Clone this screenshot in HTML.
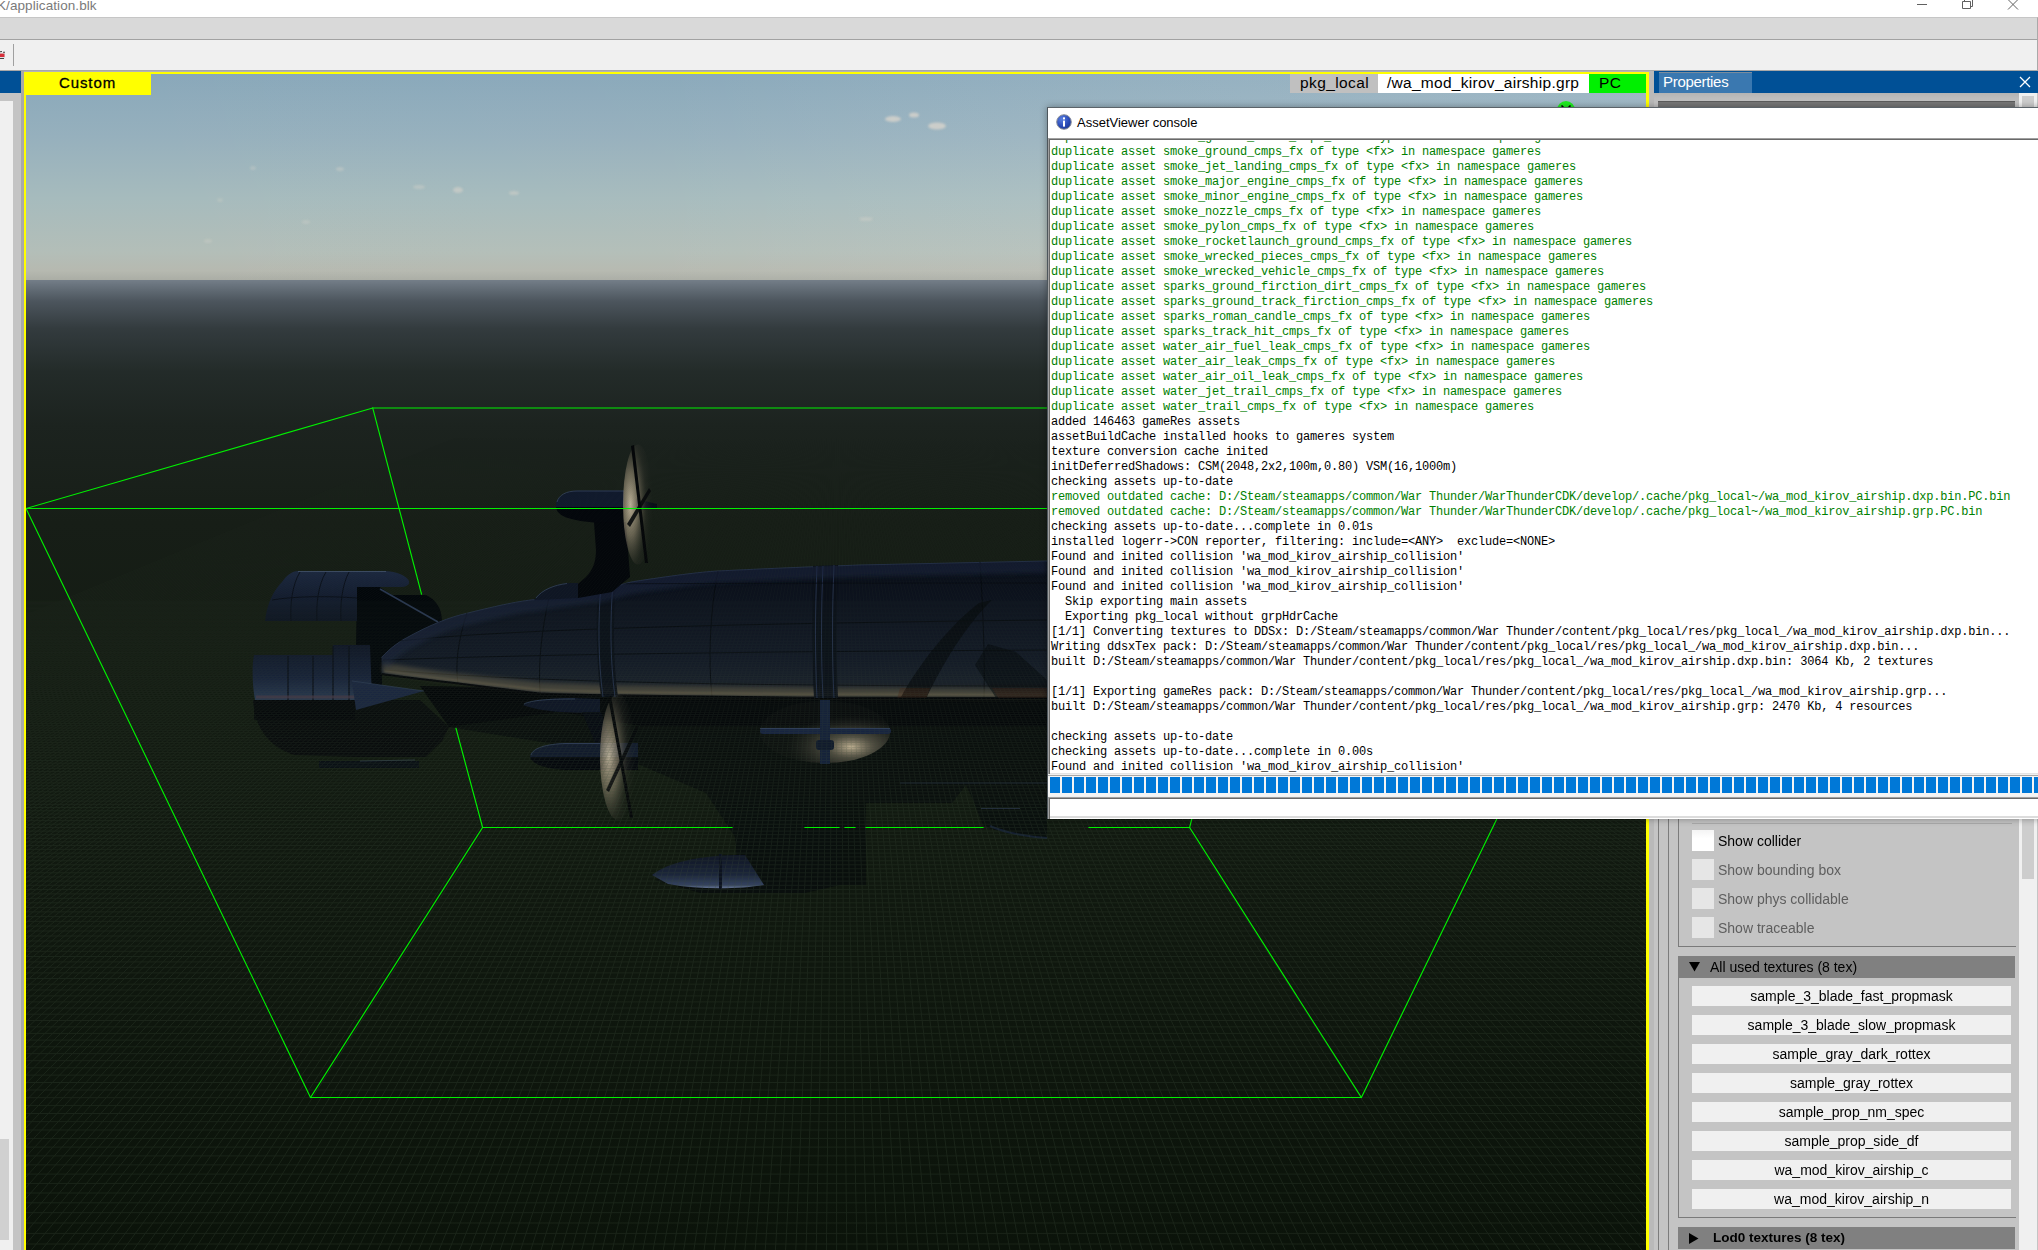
<!DOCTYPE html>
<html><head><meta charset="utf-8">
<style>
*{margin:0;padding:0;box-sizing:border-box}
html,body{width:2038px;height:1250px;overflow:hidden;background:#f0f0f0;font-family:"Liberation Sans",sans-serif;position:relative}
.a{position:absolute}
#title{left:0;top:0;width:2038px;height:17px;background:#fff}
#titletxt{left:-3px;top:-2px;font-size:13.5px;color:#7a7a7a;white-space:pre;line-height:16px;letter-spacing:0.08px}
#menubar{left:0;top:17px;width:2038px;height:23px;background:#d9d9d9;border-top:1px solid #c6c6c6;border-bottom:1px solid #a2a2a2;border-right:1px solid #a9a9a9}
#toolbar{left:0;top:40px;width:2038px;height:31px;background:#f0f0f0;border-bottom:1px solid #a8a8a8;border-right:1px solid #a9a9a9}
#leftpanel{left:0;top:71px;width:21px;height:1179px;background:#c4c4c4}
#splitL{left:21px;top:71px;width:3px;height:1179px;background:#a9a9a9}
#vp{left:24px;top:72px;width:1625px;height:1178px;background:#ff0;box-shadow:0 -1px 0 #b4b4b4}
#scene{left:26px;top:74px;width:1620px;height:1176px;overflow:hidden;background:#0e140d}
#splitR{left:1649px;top:71px;width:5px;height:1179px;background:#b9b9b9}
#props{left:1654px;top:71px;width:384px;height:1179px;background:#c4c4c4;overflow:hidden}
#phead{left:0;top:0;width:384px;height:22px;background:#005096}
#ptab{left:5px;top:1px;width:93px;height:21px;background:#3a78b0;border-top:1px solid #7b8c9c}
#ptt{left:4px;top:-1px;font-size:15px;line-height:19px;color:#fff;letter-spacing:-0.3px}
#pgrad{left:0;top:22px;width:365px;height:10px;background:linear-gradient(#b4b4b4,#c4c4c4)}
#pdark{left:4px;top:30px;width:357px;height:30px;background:#777;border-top:1px solid #5c5c5c}
#pscroll{left:365px;top:22px;width:18px;height:1157px;background:#f0f0f0}
#pthumb{left:3px;top:3px;width:12px;height:783px;background:#cdcdcd}
.vl{top:740px;height:439px;width:1px;background:#7c7c7c}
#gtopline{left:38px;top:752px;width:320px;height:1px;background:#a9a9a9}
.cb{left:38px;width:22px;height:21px;background:#e6e6e6}
.cb.on{background:linear-gradient(#f4f4f4,#fff 40%)}
.cbl{left:64px;font-size:14px;line-height:23px;color:#000;white-space:pre}
.cbl.dis{color:#5e5e5e}
.gbot{left:24px;width:338px;height:1px;background:#7a7a7a}
.shead{left:24px;width:337px;height:22px;background:#808080}
.sht{left:32px;top:0;font-size:14px;line-height:22px;color:#000;white-space:pre}
.sht.b{font-weight:bold;left:35px;font-size:13.5px}
.btn{left:38px;width:319px;height:20px;background:#f0f0f0;font-size:14px;line-height:20px;text-align:center;color:#000;white-space:pre}
#console{left:1047px;top:107px;width:1100px;height:712px;background:#f0f0f0;border-left:1px solid #4d565c;border-top:1px solid #5b6369;box-shadow:0 0 7px rgba(0,0,0,.35)}
#ctitle{left:0;top:0;width:1100px;height:30px;background:#fff}
#ctt{left:29px;top:7px;font-size:13px;line-height:16px;color:#000;white-space:pre}
#ctext{left:0;top:30px;width:1100px;height:636px;background:#fff;box-shadow:inset 1px 1px 0 #a0a0a0,inset 2px 2px 0 #696969,inset 0 -1px 0 #e3e3e3}
#cclip{left:2px;top:32px;width:1098px;height:633px;overflow:hidden}
#clines{left:1px;top:-10px;font-family:"Liberation Mono",monospace;font-size:12px;line-height:15px;letter-spacing:-0.2px;color:#000;white-space:pre}
#clines .g{color:#008000}
#cprog{left:0;top:667px;width:1100px;height:21px;border-top:1px solid #a8a8a8;background:#f4f4f4}
#cprog i{position:absolute;top:1px;margin-left:2px;width:10px;height:16px;background:#0078d7}
#cinput{left:0;top:689px;width:1100px;height:22px;background:#fff;box-shadow:inset 1px 1px 0 #a0a0a0,inset 2px 2px 0 #696969,inset 0 -1px 0 #fff,inset 0 -3px 0 #dcdcdc}
#lhead{left:0;top:71px;width:21px;height:22px;background:#005096}
#linner{left:0;top:101px;width:13px;height:1149px;background:#f0f0f0}
#lgray{left:0;top:1139px;width:9px;height:101px;background:#d0d0d0}
#tsep{left:13px;top:44px;width:1px;height:22px;background:#a0a0a0}
#custom{left:24px;top:72px;width:127px;height:23px;background:#ff0;font-size:15px;line-height:22px;color:#000;padding-left:35px;letter-spacing:0.9px;-webkit-text-stroke:0.3px #000}
.lbl{top:74px;height:19px;font-size:15.5px;line-height:17px;color:#000;white-space:pre;letter-spacing:0.4px}
#l1{left:1290px;width:88px;background:#c0c0c0;padding-left:10px}
#l2{left:1378px;width:211px;background:#fff;padding-left:9px;letter-spacing:0.28px}
#l3{left:1589px;width:57px;background:#00f000;padding-left:10px}
.wc{top:0;stroke:#555;fill:none}
.mono{font-family:"Liberation Mono",monospace}
</style></head>
<body>
<div id="title" class="a"><div id="titletxt" class="a">K/application.blk</div></div>
<div id="menubar" class="a"></div>
<div id="toolbar" class="a"></div>
<div id="leftpanel" class="a"></div>
<div id="splitL" class="a"></div>
<div id="lhead" class="a"></div><div id="linner" class="a"></div><div id="lgray" class="a"></div>
<div id="tsep" class="a"></div>
<svg class="a" style="left:0;top:50px" width="7" height="10" viewBox="0 0 7 10"><rect x="0" y="2.5" width="5" height="6" fill="#dde4e4"/><rect x="0" y="3.6" width="4.5" height="3.4" fill="#d62f3a"/><path d="M0 1.8L2 1.5M3 2.3H5M0 8.5H4" stroke="#444" stroke-width="1.1"/></svg>
<svg class="a wc" style="left:1912px" width="20" height="12" viewBox="0 0 20 12"><path d="M5 4.5H15" stroke="#606060" stroke-width="1"/></svg>
<svg class="a wc" style="left:1958px" width="20" height="12" viewBox="0 0 20 12"><path d="M4.5 1.5H12.5V8.5H4.5Z M6.5 1.5V-0.5H14.5V6.5H12.5" stroke="#606060" stroke-width="1" fill="none"/></svg>
<svg class="a wc" style="left:2003px" width="20" height="12" viewBox="0 0 20 12"><path d="M5 -0.5L15 9.5M15 -0.5L5 9.5" stroke="#606060" stroke-width="1"/></svg>

<div id="vp" class="a"></div>
<svg id="scene" class="a" width="1620" height="1176" viewBox="26 74 1620 1176">
<defs>
<linearGradient id="sky" x1="0" y1="74" x2="0" y2="281" gradientUnits="userSpaceOnUse"><stop offset="0" stop-color="#89a8ba"/><stop offset="0.3" stop-color="#96b0bd"/><stop offset="0.6" stop-color="#a6bbbd"/><stop offset="0.86" stop-color="#b3beb8"/><stop offset="0.95" stop-color="#b6b9b0"/><stop offset="1" stop-color="#a9aca4"/></linearGradient>
<linearGradient id="skyh" x1="26" y1="0" x2="1646" y2="0" gradientUnits="userSpaceOnUse"><stop offset="0" stop-color="#fff" stop-opacity="0"/><stop offset="0.4" stop-color="#fff" stop-opacity="0.02"/><stop offset="1" stop-color="#dfe8ea" stop-opacity="0.2"/></linearGradient>
<linearGradient id="gnd" x1="0" y1="280" x2="0" y2="1250" gradientUnits="userSpaceOnUse"><stop offset="0" stop-color="#747e88"/><stop offset="0.004" stop-color="#6c7680"/><stop offset="0.011" stop-color="#5f6972"/><stop offset="0.022" stop-color="#4c555d"/><stop offset="0.05" stop-color="#333b3e"/><stop offset="0.095" stop-color="#232b29"/><stop offset="0.15" stop-color="#1c231f"/><stop offset="0.25" stop-color="#171e17"/><stop offset="0.43" stop-color="#131b12"/><stop offset="0.64" stop-color="#10180f"/><stop offset="1" stop-color="#0b130a"/></linearGradient>
<linearGradient id="gridfade" x1="0" y1="430" x2="0" y2="1250" gradientUnits="userSpaceOnUse"><stop offset="0" stop-color="#fff" stop-opacity="0"/><stop offset="0.2" stop-color="#fff" stop-opacity="0.3"/><stop offset="0.45" stop-color="#fff" stop-opacity="0.85"/><stop offset="1" stop-color="#fff" stop-opacity="1"/></linearGradient>
<mask id="gm" maskUnits="userSpaceOnUse" x="26" y="74" width="1620" height="1176"><rect x="26" y="280" width="1620" height="970" fill="url(#gridfade)"/></mask>
<linearGradient id="hull" x1="0" y1="560" x2="0" y2="700" gradientUnits="userSpaceOnUse"><stop offset="0" stop-color="#0a0f18"/><stop offset="0.4" stop-color="#0e1420"/><stop offset="0.7" stop-color="#121926"/><stop offset="0.85" stop-color="#181f2a"/><stop offset="1" stop-color="#1c2127"/></linearGradient>
<radialGradient id="prop" cx="0.25" cy="0.5" r="0.75"><stop offset="0" stop-color="#d8caae" stop-opacity="0.85"/><stop offset="0.35" stop-color="#a89a80" stop-opacity="0.55"/><stop offset="0.7" stop-color="#4a463c" stop-opacity="0.2"/><stop offset="1" stop-color="#2a2a26" stop-opacity="0"/></radialGradient>
<radialGradient id="prop2" cx="0.7" cy="0.74" r="0.5"><stop offset="0" stop-color="#d8c6a4" stop-opacity="0.9"/><stop offset="0.35" stop-color="#8a806c" stop-opacity="0.55"/><stop offset="1" stop-color="#2a2a26" stop-opacity="0.12"/></radialGradient>
<linearGradient id="pod" x1="0" y1="855" x2="0" y2="890" gradientUnits="userSpaceOnUse"><stop offset="0" stop-color="#0f1524"/><stop offset="0.55" stop-color="#1b253a"/><stop offset="0.85" stop-color="#34425e"/><stop offset="1" stop-color="#7a8aa8"/></linearGradient>
<linearGradient id="nac" x1="0" y1="0" x2="0" y2="1"><stop offset="0" stop-color="#1d2840"/><stop offset="0.5" stop-color="#121a2a"/><stop offset="1" stop-color="#070b12"/></linearGradient>
<linearGradient id="fin" x1="0" y1="571" x2="0" y2="621" gradientUnits="userSpaceOnUse"><stop offset="0" stop-color="#1c2840"/><stop offset="0.5" stop-color="#141d30"/><stop offset="1" stop-color="#0e1522"/></linearGradient>
<linearGradient id="cyl" x1="0" y1="645" x2="0" y2="700" gradientUnits="userSpaceOnUse"><stop offset="0" stop-color="#0f1626"/><stop offset="0.6" stop-color="#18233a"/><stop offset="1" stop-color="#2a3a52"/></linearGradient>
<clipPath id="hclip"><path d="M381.6 674 L381.6 657.6 C390 648 400 641 410 636 C430 625 450 617 467 613.3 C500 605 520 601 534.6 599.6 C560 595 580 592 602 590 C615 587 625 583 633.7 581.6 C670 576 700 572 718 571 C760 569 780 568 860 565 L1047 561 L1047 698 L800 697.7 L623 695.6 C590 695 560 694.5 538.8 693.5 C510 690 480 686 454.4 683 C420 679 395 676 381.6 674 Z"/></clipPath>
<filter id="blur2" x="-5%" y="-50%" width="110%" height="200%"><feGaussianBlur stdDeviation="2.2"/></filter>
<filter id="blur1" x="-20%" y="-20%" width="140%" height="140%"><feGaussianBlur stdDeviation="1.2"/></filter>
</defs>
<rect x="26" y="74" width="1620" height="207" fill="url(#sky)"/>
<rect x="26" y="280" width="1620" height="970" fill="url(#gnd)"/>
<rect x="26" y="74" width="1620" height="206" fill="url(#skyh)"/>
<g fill="#d8d4cc" opacity="0.8" filter="url(#blur1)">
<ellipse cx="893" cy="119" rx="8" ry="3"/><ellipse cx="914" cy="115" rx="5" ry="2.5"/><ellipse cx="937" cy="126" rx="9" ry="3.5"/>
<ellipse cx="458" cy="190" rx="5" ry="3" opacity=".7"/><ellipse cx="419" cy="187" rx="6" ry="2" opacity=".5"/><ellipse cx="514" cy="193" rx="5" ry="2" opacity=".6"/>
<ellipse cx="253" cy="168" rx="3" ry="2" opacity=".4"/><ellipse cx="340" cy="169" rx="4" ry="2" opacity=".5"/><ellipse cx="866" cy="219" rx="7" ry="2" opacity=".5"/>
<ellipse cx="208" cy="241" rx="4" ry="2" opacity=".4"/><ellipse cx="306" cy="222" rx="4" ry="2" opacity=".4"/><ellipse cx="220" cy="200" rx="3" ry="2" opacity=".35"/>
</g>
<!-- airship -->
<g id="ship">
<!-- under-hull translucent shadow region -->
<path d="M449 727 L560 712 L640 726 L1047 726 L1047 838 C1030 836 1010 834 1000 831 C990 829 985 826 983 825 L973 800 L966 785 L952 803 L866 803 L866 885 L840 885 L805 893 L700 893 L655 880 L737 861 L735 837 L706 793 L640 765 L560 745 Z" fill="#070b0d" opacity="0.72"/>
<path d="M900 783 H1047" stroke="#2a3a58" stroke-width="1" opacity=".5"/><path d="M981 808.5 H1020" stroke="#3a4a68" stroke-width="1" opacity=".5"/>
<path d="M420 686 L1047 696 L1047 726 L640 726 L560 712 L449 727 Z" fill="#04070a" opacity="0.92"/>
<!-- tail shadow + strip -->
<path d="M253 700 C255 725 265 745 294 755 L356 757 L426 757 L442 741 L449 727 L420 700 Z" fill="#080b0d" opacity="0.85"/>
<path d="M319 761 L419 761 L419 768 L319 768 Z" fill="#0b1016" opacity=".95"/>
<path d="M360 761 L415 760" stroke="#3a4a5e" stroke-width="1" opacity=".6"/>
<!-- dark connector -->
<path d="M357 586 L378 586 L392 595 L426 595 C436 600 442 608 442 622 L440 640 L400 650 L382 658 L382 690 L372 700 L356 700 L356 645 Z" fill="#03070b"/>
<path d="M380 589 L438 622" stroke="#2a3852" stroke-width="1.6"/>
<!-- upper fin -->
<path d="M265 621 C267 603 274 590 282 582 C287 575 292 571 298 571 L386 571 C398 572 407 576 409 581 C410 585 406 587 400 587 L357 587 L357 621 Z" fill="url(#fin)"/>
<g stroke="#0a0f18" stroke-width="1" fill="none" opacity=".9"><path d="M300 572 C292 585 290 605 291 621"/><path d="M326 572 C318 585 316 605 317 621"/><path d="M349 572 C342 585 340 605 341 621"/><path d="M272 600 C295 596 330 596 357 598"/></g>
<path d="M298 571.5 L386 571.5" stroke="#4a5a72" stroke-width="1" opacity=".7"/>
<!-- lower cylinder -->
<path d="M255 700 C252 684 252 664 254 655 L333 655 L333 645 L370 645 L372 700 Z" fill="url(#cyl)"/>
<path d="M254 720 L355 720 L355 700 L254 700 Z" fill="#05080b" opacity=".75"/>
<g stroke="#0a0f18" stroke-width="1.2" fill="none"><path d="M288 656 V700"/><path d="M313 656 V700"/><path d="M333 646 V700"/><path d="M349 646 V700"/></g>
<path d="M256 697 L370 697" stroke="#4a3a48" stroke-width="3" opacity=".7"/>
<!-- lower blade fin -->
<path d="M352 681 L424 691 L356 710 Z" fill="#1b2740"/>
<path d="M352 681 L424 691" stroke="#33435c" stroke-width="1" opacity=".6"/>
<!-- hull -->
<path d="M381.6 674 L381.6 657.6 C390 648 400 641 410 636 C430 625 450 617 467 613.3 C500 605 520 601 534.6 599.6 C560 595 580 592 602 590 C615 587 625 583 633.7 581.6 C670 576 700 572 718 571 C760 569 780 568 860 565 L1047 561 L1047 698 L800 697.7 L623 695.6 C590 695 560 694.5 538.8 693.5 C510 690 480 686 454.4 683 C420 679 395 676 381.6 674 Z" fill="url(#hull)"/>
<path d="M381.6 657.6 C390 648 400 641 410 636 C430 625 450 617 467 613.3 C500 605 520 601 534.6 599.6 C560 595 580 592 602 590 C615 587 625 583 633.7 581.6 C670 576 700 572 718 571 C760 569 780 568 860 565 L1047 561" stroke="#2c3a54" stroke-width="1" fill="none" opacity=".8"/>
<g stroke="#060a0f" stroke-width="1" fill="none" opacity=".85">
<path d="M400 641 C500 630 700 624 1047 620"/><path d="M383 660 C520 655 700 652 1047 650"/><path d="M385 670 C520 681 700 686 1047 686"/>
<path d="M467 613 C458 640 455 665 458 684"/><path d="M549 597 C542 630 538 660 540 693"/><path d="M718 571 C710 610 708 660 712 697"/><path d="M980 562 C983 610 985 660 984 697"/>
</g>
<path d="M383 667 C420 674 454 678 540 687 C560 688 590 689 623 690 L800 692 L1047 693" stroke="#6e654e" stroke-width="9" fill="none" opacity=".5" filter="url(#blur2)"/>
<path d="M384 671 C420 677 454 680 540 690 C560 691 590 692 623 692.5 L800 694.5 L1047 695" stroke="#8a7d5e" stroke-width="2.5" fill="none" opacity=".45" filter="url(#blur1)"/>
<path d="M381.6 674 C395 676 420 679 454.4 683 C480 686 510 690 538.8 693.5 C560 694.5 590 695 623 695.6 L800 697.7 L1047 698" stroke="#05070a" stroke-width="2" fill="none"/>
<g fill="#0a0f18" opacity=".9">
<path d="M598 584 L616 581 C613 620 613 660 618 697 L601 697 C596 660 596 620 598 584 Z"/>
<path d="M813 566 L838 565 C836 610 836 660 838 698 L814 698 C812 660 812 610 813 566 Z"/>
</g>
<g stroke="#24304a" stroke-width="1" fill="none">
<path d="M601 584 C598 620 598 660 603 697 M613 582 C610 620 610 660 615 697"/>
<path d="M817 566 C815 610 815 660 817 698 M823 566 C821 610 821 660 823 698 M834 565 C832 610 832 660 834 698"/>
</g>
<g clip-path="url(#hclip)">
<path d="M381.6 662 C390 652 400 645 410 640 C430 629 450 621 467 617.3 C500 609 520 605 534.6 603.6 C560 599 580 596 602 594 C615 591 625 587 633.7 585.6 C670 580 700 576 718 575 C760 573 780 572 860 569 L1047 565" stroke="#1a2640" stroke-width="16" fill="none" opacity=".55" filter="url(#blur2)"/>
<path d="M400 584 C600 584 800 583 1047 583" stroke="#060a0f" stroke-width="1" fill="none" opacity=".6"/>
<path d="M979 603 C950 625 918 665 900 699 L926 699 C942 665 966 625 992 600 Z" fill="#04070b" opacity=".65"/>
<path d="M988 644 L975 665 L996 698 L1047 698 L1047 680 L1016 652 Z" fill="#04070b" opacity=".55"/>
<path d="M900 688 L930 688 L926 699 L897 699 Z" fill="#4a2212" opacity=".3"/>
<path d="M992 688 H1047 V699 H999 Z" fill="#4a2212" opacity=".28"/>
</g>
<!-- upper hull fin -->
<path d="M534 600 C540 591 552 585 567 583 L578 583 L578 598 Z" fill="#0f1624"/><path d="M536 598 C542 590 554 585 567 583.5" stroke="#3a4a64" stroke-width="1" fill="none" opacity=".7"/>
<!-- upper strut + nacelle -->
<path d="M594 522 L626 522 L630 577 L612 592 L578 598 L578 584 L586 577 C594 569 596 560 596 550 Z" fill="#04070b"/>
<path d="M556 505 C556 497 566 491 577 490.5 L624 490.5 L624 508 L556 508 Z" fill="#111a2d"/><path d="M557 502 C559 495 566 491 577 491 L624 491" stroke="#3a4a66" stroke-width="1" fill="none" opacity=".7"/>
<path d="M556 507 C557 515 566 520 594 522.5 L624 522.5 L624 507 Z" fill="#04070c"/>
<path d="M636 499 L657 504 L657 508 L636 511 Z" fill="#0a0f18"/>
<ellipse cx="638" cy="504.5" rx="15" ry="60" fill="url(#prop)"/>
<path d="M631 446 L634 445 L648 563 L645 563 Z" fill="#06080a"/>
<path d="M627 524 L649 488 L651 491 L630 527 Z" fill="#080a0c" opacity=".9"/>
<!-- lower nacelle + prop -->
<path d="M523 705 C530 700 548 698 575 698 L600 699 L600 713 C570 713 540 712 523 705 Z" fill="#0e1526"/><path d="M524 704 C532 700 548 699 575 699" stroke="#34445e" stroke-width="1" fill="none" opacity=".8"/>
<path d="M582 712 L601 712 L612 745 L596 745 Z" fill="#070b12"/>
<path d="M530 757 C531 749 545 744 566 743 L638 743 L638 758 L530 758 Z" fill="#111a2c"/><path d="M531 755 C533 748 546 744 566 743.5 L600 743.5" stroke="#3a4a66" stroke-width="1" fill="none" opacity=".7"/>
<path d="M530 757 C532 764 545 769 566 770 L638 770 L638 757 Z" fill="#05080d"/>
<ellipse cx="618" cy="757" rx="18" ry="63" fill="url(#prop)"/>
<path d="M608 697 L611 696 L633 818 L630 818 Z" fill="#06080a"/>
<path d="M606 790 L636 726 L639 728 L609 792 Z" fill="#06080a" opacity=".85"/>
<!-- bottom prop -->
<ellipse cx="825" cy="732" rx="65" ry="31" fill="url(#prop2)"/>
<rect x="760" y="728" width="131" height="6" rx="3" fill="#172440"/>
<path d="M760 728.5 H890" stroke="#3a4a68" stroke-width="1" opacity=".7"/>
<rect x="820" y="700" width="10" height="64" fill="#15223a"/><rect x="816" y="740" width="18" height="10" rx="3" fill="#101a2c"/>
<!-- gondola pod -->
<path d="M652 875 C668 862 700 856 735 855 L745 855 L764 885 C740 889 700 890 668 884 Z" fill="url(#pod)"/>
<rect x="719" y="854" width="3" height="35" fill="#0c1220"/>
<!-- right pod -->
<path d="M990 826 C1005 833 1030 837 1047 838" stroke="#1c2a48" stroke-width="2" fill="none" opacity=".6"/>
<rect x="840" y="800" width="26" height="85" fill="#0a0f0c" opacity=".6"/>
</g>
<g mask="url(#gm)" stroke="#3d4d3b" stroke-width="1" fill="none" opacity="0.3">
<path d="M474.1 430.0L-1507.8 1250M475.6 430.0L-1497.6 1250M477.2 430.0L-1487.5 1250M478.8 430.0L-1477.3 1250M480.4 430.0L-1467.1 1250M481.9 430.0L-1456.9 1250M483.5 430.0L-1446.7 1250M485.1 430.0L-1436.5 1250M486.7 430.0L-1426.3 1250M488.2 430.0L-1416.1 1250M489.8 430.0L-1405.9 1250M491.4 430.0L-1395.7 1250M493.0 430.0L-1385.5 1250M494.5 430.0L-1375.3 1250M496.1 430.0L-1365.1 1250M497.7 430.0L-1354.9 1250M499.3 430.0L-1344.7 1250M500.9 430.0L-1334.6 1250M502.4 430.0L-1324.4 1250M504.0 430.0L-1314.2 1250M505.6 430.0L-1304.0 1250M507.2 430.0L-1293.8 1250M508.7 430.0L-1283.6 1250M510.3 430.0L-1273.4 1250M511.9 430.0L-1263.2 1250M513.5 430.0L-1253.0 1250M515.0 430.0L-1242.8 1250M516.6 430.0L-1232.6 1250M518.2 430.0L-1222.4 1250M519.8 430.0L-1212.2 1250M521.3 430.0L-1202.0 1250M522.9 430.0L-1191.9 1250M524.5 430.0L-1181.7 1250M526.1 430.0L-1171.5 1250M527.7 430.0L-1161.3 1250M529.2 430.0L-1151.1 1250M530.8 430.0L-1140.9 1250M532.4 430.0L-1130.7 1250M534.0 430.0L-1120.5 1250M535.5 430.0L-1110.3 1250M537.1 430.0L-1100.1 1250M538.7 430.0L-1089.9 1250M540.3 430.0L-1079.7 1250M541.8 430.0L-1069.5 1250M543.4 430.0L-1059.3 1250M545.0 430.0L-1049.1 1250M546.6 430.0L-1039.0 1250M548.1 430.0L-1028.8 1250M549.7 430.0L-1018.6 1250M551.3 430.0L-1008.4 1250M552.9 430.0L-998.2 1250M554.4 430.0L-988.0 1250M556.0 430.0L-977.8 1250M557.6 430.0L-967.6 1250M559.2 430.0L-957.4 1250M560.8 430.0L-947.2 1250M562.3 430.0L-937.0 1250M563.9 430.0L-926.8 1250M565.5 430.0L-916.6 1250M567.1 430.0L-906.4 1250M568.6 430.0L-896.2 1250M570.2 430.0L-886.1 1250M571.8 430.0L-875.9 1250M573.4 430.0L-865.7 1250M574.9 430.0L-855.5 1250M576.5 430.0L-845.3 1250M578.1 430.0L-835.1 1250M579.7 430.0L-824.9 1250M581.2 430.0L-814.7 1250M582.8 430.0L-804.5 1250M584.4 430.0L-794.3 1250M586.0 430.0L-784.1 1250M587.5 430.0L-773.9 1250M589.1 430.0L-763.7 1250M590.7 430.0L-753.5 1250M592.3 430.0L-743.3 1250M593.9 430.0L-733.2 1250M595.4 430.0L-723.0 1250M597.0 430.0L-712.8 1250M598.6 430.0L-702.6 1250M600.2 430.0L-692.4 1250M601.7 430.0L-682.2 1250M603.3 430.0L-672.0 1250M604.9 430.0L-661.8 1250M606.5 430.0L-651.6 1250M608.0 430.0L-641.4 1250M609.6 430.0L-631.2 1250M611.2 430.0L-621.0 1250M612.8 430.0L-610.8 1250M614.3 430.0L-600.6 1250M615.9 430.0L-590.5 1250M617.5 430.0L-580.3 1250M619.1 430.0L-570.1 1250M620.7 430.0L-559.9 1250M622.2 430.0L-549.7 1250M623.8 430.0L-539.5 1250M625.4 430.0L-529.3 1250M627.0 430.0L-519.1 1250M628.5 430.0L-508.9 1250M630.1 430.0L-498.7 1250M631.7 430.0L-488.5 1250M633.3 430.0L-478.3 1250M634.8 430.0L-468.1 1250M636.4 430.0L-457.9 1250M638.0 430.0L-447.7 1250M639.6 430.0L-437.6 1250M641.1 430.0L-427.4 1250M642.7 430.0L-417.2 1250M644.3 430.0L-407.0 1250M645.9 430.0L-396.8 1250M647.4 430.0L-386.6 1250M649.0 430.0L-376.4 1250M650.6 430.0L-366.2 1250M652.2 430.0L-356.0 1250M653.8 430.0L-345.8 1250M655.3 430.0L-335.6 1250M656.9 430.0L-325.4 1250M658.5 430.0L-315.2 1250M660.1 430.0L-305.0 1250M661.6 430.0L-294.8 1250M663.2 430.0L-284.7 1250M664.8 430.0L-274.5 1250M666.4 430.0L-264.3 1250M667.9 430.0L-254.1 1250M669.5 430.0L-243.9 1250M671.1 430.0L-233.7 1250M672.7 430.0L-223.5 1250M674.2 430.0L-213.3 1250M675.8 430.0L-203.1 1250M677.4 430.0L-192.9 1250M679.0 430.0L-182.7 1250M680.5 430.0L-172.5 1250M682.1 430.0L-162.3 1250M683.7 430.0L-152.1 1250M685.3 430.0L-141.9 1250M686.9 430.0L-131.8 1250M688.4 430.0L-121.6 1250M690.0 430.0L-111.4 1250M691.6 430.0L-101.2 1250M693.2 430.0L-91.0 1250M694.7 430.0L-80.8 1250M696.3 430.0L-70.6 1250M697.9 430.0L-60.4 1250M699.5 430.0L-50.2 1250M701.0 430.0L-40.0 1250M702.6 430.0L-29.8 1250M704.2 430.0L-19.6 1250M705.8 430.0L-9.4 1250M707.3 430.0L0.8 1250M708.9 430.0L10.9 1250M710.5 430.0L21.1 1250M712.1 430.0L31.3 1250M713.7 430.0L41.5 1250M715.2 430.0L51.7 1250M716.8 430.0L61.9 1250M718.4 430.0L72.1 1250M720.0 430.0L82.3 1250M721.5 430.0L92.5 1250M723.1 430.0L102.7 1250M724.7 430.0L112.9 1250M726.3 430.0L123.1 1250M727.8 430.0L133.3 1250M729.4 430.0L143.5 1250M731.0 430.0L153.7 1250M732.6 430.0L163.8 1250M734.1 430.0L174.0 1250M735.7 430.0L184.2 1250M737.3 430.0L194.4 1250M738.9 430.0L204.6 1250M740.4 430.0L214.8 1250M742.0 430.0L225.0 1250M743.6 430.0L235.2 1250M745.2 430.0L245.4 1250M746.8 430.0L255.6 1250M748.3 430.0L265.8 1250M749.9 430.0L276.0 1250M751.5 430.0L286.2 1250M753.1 430.0L296.4 1250M754.6 430.0L306.6 1250M756.2 430.0L316.7 1250M757.8 430.0L326.9 1250M759.4 430.0L337.1 1250M760.9 430.0L347.3 1250M762.5 430.0L357.5 1250M764.1 430.0L367.7 1250M765.7 430.0L377.9 1250M767.2 430.0L388.1 1250M768.8 430.0L398.3 1250M770.4 430.0L408.5 1250M772.0 430.0L418.7 1250M773.5 430.0L428.9 1250M775.1 430.0L439.1 1250M776.7 430.0L449.3 1250M778.3 430.0L459.5 1250M779.9 430.0L469.6 1250M781.4 430.0L479.8 1250M783.0 430.0L490.0 1250M784.6 430.0L500.2 1250M786.2 430.0L510.4 1250M787.7 430.0L520.6 1250M789.3 430.0L530.8 1250M790.9 430.0L541.0 1250M792.5 430.0L551.2 1250M794.0 430.0L561.4 1250M795.6 430.0L571.6 1250M797.2 430.0L581.8 1250M798.8 430.0L592.0 1250M800.3 430.0L602.2 1250M801.9 430.0L612.3 1250M803.5 430.0L622.5 1250M805.1 430.0L632.7 1250M806.7 430.0L642.9 1250M808.2 430.0L653.1 1250M809.8 430.0L663.3 1250M811.4 430.0L673.5 1250M813.0 430.0L683.7 1250M814.5 430.0L693.9 1250M816.1 430.0L704.1 1250M817.7 430.0L714.3 1250M819.3 430.0L724.5 1250M820.8 430.0L734.7 1250M822.4 430.0L744.9 1250M824.0 430.0L755.1 1250M825.6 430.0L765.2 1250M827.1 430.0L775.4 1250M828.7 430.0L785.6 1250M830.3 430.0L795.8 1250M831.9 430.0L806.0 1250M833.4 430.0L816.2 1250M835.0 430.0L826.4 1250M836.6 430.0L836.6 1250M838.2 430.0L846.8 1250M839.8 430.0L857.0 1250M841.3 430.0L867.2 1250M842.9 430.0L877.4 1250M844.5 430.0L887.6 1250M846.1 430.0L897.8 1250M847.6 430.0L908.0 1250M849.2 430.0L918.1 1250M850.8 430.0L928.3 1250M852.4 430.0L938.5 1250M853.9 430.0L948.7 1250M855.5 430.0L958.9 1250M857.1 430.0L969.1 1250M858.7 430.0L979.3 1250M860.2 430.0L989.5 1250M861.8 430.0L999.7 1250M863.4 430.0L1009.9 1250M865.0 430.0L1020.1 1250M866.5 430.0L1030.3 1250M868.1 430.0L1040.5 1250M869.7 430.0L1050.7 1250M871.3 430.0L1060.9 1250M872.9 430.0L1071.0 1250M874.4 430.0L1081.2 1250M876.0 430.0L1091.4 1250M877.6 430.0L1101.6 1250M879.2 430.0L1111.8 1250M880.7 430.0L1122.0 1250M882.3 430.0L1132.2 1250M883.9 430.0L1142.4 1250M885.5 430.0L1152.6 1250M887.0 430.0L1162.8 1250M888.6 430.0L1173.0 1250M890.2 430.0L1183.2 1250M891.8 430.0L1193.4 1250M893.3 430.0L1203.6 1250M894.9 430.0L1213.7 1250M896.5 430.0L1223.9 1250M898.1 430.0L1234.1 1250M899.7 430.0L1244.3 1250M901.2 430.0L1254.5 1250M902.8 430.0L1264.7 1250M904.4 430.0L1274.9 1250M906.0 430.0L1285.1 1250M907.5 430.0L1295.3 1250M909.1 430.0L1305.5 1250M910.7 430.0L1315.7 1250M912.3 430.0L1325.9 1250M913.8 430.0L1336.1 1250M915.4 430.0L1346.3 1250M917.0 430.0L1356.5 1250M918.6 430.0L1366.6 1250M920.1 430.0L1376.8 1250M921.7 430.0L1387.0 1250M923.3 430.0L1397.2 1250M924.9 430.0L1407.4 1250M926.4 430.0L1417.6 1250M928.0 430.0L1427.8 1250M929.6 430.0L1438.0 1250M931.2 430.0L1448.2 1250M932.8 430.0L1458.4 1250M934.3 430.0L1468.6 1250M935.9 430.0L1478.8 1250M937.5 430.0L1489.0 1250M939.1 430.0L1499.2 1250M940.6 430.0L1509.4 1250M942.2 430.0L1519.5 1250M943.8 430.0L1529.7 1250M945.4 430.0L1539.9 1250M946.9 430.0L1550.1 1250M948.5 430.0L1560.3 1250M950.1 430.0L1570.5 1250M951.7 430.0L1580.7 1250M953.2 430.0L1590.9 1250M954.8 430.0L1601.1 1250M956.4 430.0L1611.3 1250M958.0 430.0L1621.5 1250M959.5 430.0L1631.7 1250M961.1 430.0L1641.9 1250M962.7 430.0L1652.1 1250M964.3 430.0L1662.3 1250M965.9 430.0L1672.4 1250M967.4 430.0L1682.6 1250M969.0 430.0L1692.8 1250M970.6 430.0L1703.0 1250M972.2 430.0L1713.2 1250M973.7 430.0L1723.4 1250M975.3 430.0L1733.6 1250M976.9 430.0L1743.8 1250M978.5 430.0L1754.0 1250M980.0 430.0L1764.2 1250M981.6 430.0L1774.4 1250M983.2 430.0L1784.6 1250M984.8 430.0L1794.8 1250M986.3 430.0L1805.0 1250M987.9 430.0L1815.1 1250M989.5 430.0L1825.3 1250M991.1 430.0L1835.5 1250M992.7 430.0L1845.7 1250M994.2 430.0L1855.9 1250M995.8 430.0L1866.1 1250M997.4 430.0L1876.3 1250M999.0 430.0L1886.5 1250M1000.5 430.0L1896.7 1250M1002.1 430.0L1906.9 1250M1003.7 430.0L1917.1 1250M1005.3 430.0L1927.3 1250M1006.8 430.0L1937.5 1250M1008.4 430.0L1947.7 1250M1010.0 430.0L1957.9 1250M1011.6 430.0L1968.0 1250M1013.1 430.0L1978.2 1250M1014.7 430.0L1988.4 1250M1016.3 430.0L1998.6 1250M1017.9 430.0L2008.8 1250M1019.4 430.0L2019.0 1250M1021.0 430.0L2029.2 1250M1022.6 430.0L2039.4 1250M1024.2 430.0L2049.6 1250M1025.8 430.0L2059.8 1250M1027.3 430.0L2070.0 1250M1028.9 430.0L2080.2 1250M1030.5 430.0L2090.4 1250M1032.1 430.0L2100.6 1250M1033.6 430.0L2110.8 1250M1035.2 430.0L2120.9 1250M1036.8 430.0L2131.1 1250M1038.4 430.0L2141.3 1250M1039.9 430.0L2151.5 1250M1041.5 430.0L2161.7 1250M1043.1 430.0L2171.9 1250M1044.7 430.0L2182.1 1250M1046.2 430.0L2192.3 1250M1047.8 430.0L2202.5 1250M1049.4 430.0L2212.7 1250M1051.0 430.0L2222.9 1250M1052.5 430.0L2233.1 1250M1054.1 430.0L2243.3 1250M1055.7 430.0L2253.5 1250M1057.3 430.0L2263.7 1250M1058.9 430.0L2273.8 1250M1060.4 430.0L2284.0 1250M1062.0 430.0L2294.2 1250M1063.6 430.0L2304.4 1250M1065.2 430.0L2314.6 1250M1066.7 430.0L2324.8 1250M1068.3 430.0L2335.0 1250M1069.9 430.0L2345.2 1250M1071.5 430.0L2355.4 1250M1073.0 430.0L2365.6 1250M1074.6 430.0L2375.8 1250M1076.2 430.0L2386.0 1250M1077.8 430.0L2396.2 1250M1079.3 430.0L2406.4 1250M1080.9 430.0L2416.5 1250M1082.5 430.0L2426.7 1250M1084.1 430.0L2436.9 1250M1085.7 430.0L2447.1 1250M1087.2 430.0L2457.3 1250M1088.8 430.0L2467.5 1250M1090.4 430.0L2477.7 1250M1092.0 430.0L2487.9 1250M1093.5 430.0L2498.1 1250M1095.1 430.0L2508.3 1250M1096.7 430.0L2518.5 1250M1098.3 430.0L2528.7 1250M1099.8 430.0L2538.9 1250M1101.4 430.0L2549.1 1250M1103.0 430.0L2559.3 1250M1104.6 430.0L2569.4 1250M1106.1 430.0L2579.6 1250M1107.7 430.0L2589.8 1250M1109.3 430.0L2600.0 1250M1110.9 430.0L2610.2 1250M1112.4 430.0L2620.4 1250M1114.0 430.0L2630.6 1250M1115.6 430.0L2640.8 1250M1117.2 430.0L2651.0 1250M1118.8 430.0L2661.2 1250M1120.3 430.0L2671.4 1250M1121.9 430.0L2681.6 1250M1123.5 430.0L2691.8 1250M1125.1 430.0L2702.0 1250M1126.6 430.0L2712.2 1250M1128.2 430.0L2722.3 1250M1129.8 430.0L2732.5 1250M1131.4 430.0L2742.7 1250M1132.9 430.0L2752.9 1250M1134.5 430.0L2763.1 1250M1136.1 430.0L2773.3 1250M1137.7 430.0L2783.5 1250M1139.2 430.0L2793.7 1250M1140.8 430.0L2803.9 1250M1142.4 430.0L2814.1 1250M1144.0 430.0L2824.3 1250M1145.5 430.0L2834.5 1250M1147.1 430.0L2844.7 1250M1148.7 430.0L2854.9 1250M1150.3 430.0L2865.1 1250M1151.9 430.0L2875.2 1250M1153.4 430.0L2885.4 1250M1155.0 430.0L2895.6 1250M1156.6 430.0L2905.8 1250M1158.2 430.0L2916.0 1250M1159.7 430.0L2926.2 1250M1161.3 430.0L2936.4 1250M1162.9 430.0L2946.6 1250M1164.5 430.0L2956.8 1250M1166.0 430.0L2967.0 1250M1167.6 430.0L2977.2 1250M1169.2 430.0L2987.4 1250M1170.8 430.0L2997.6 1250M1172.3 430.0L3007.8 1250M1173.9 430.0L3017.9 1250M1175.5 430.0L3028.1 1250M1177.1 430.0L3038.3 1250M1178.7 430.0L3048.5 1250M1180.2 430.0L3058.7 1250M1181.8 430.0L3068.9 1250M1183.4 430.0L3079.1 1250M1185.0 430.0L3089.3 1250M1186.5 430.0L3099.5 1250M1188.1 430.0L3109.7 1250M1189.7 430.0L3119.9 1250M1191.3 430.0L3130.1 1250M1192.8 430.0L3140.3 1250M1194.4 430.0L3150.5 1250M1196.0 430.0L3160.7 1250M1197.6 430.0L3170.8 1250M1199.1 430.0L3181.0 1250"/>
<path d="M26 1244.0H1646M26 1233.4H1646M26 1223.0H1646M26 1212.7H1646M26 1202.8H1646M26 1193.0H1646M26 1183.4H1646M26 1174.1H1646M26 1164.9H1646M26 1155.9H1646M26 1147.1H1646M26 1138.4H1646M26 1130.0H1646M26 1121.7H1646M26 1113.5H1646M26 1105.6H1646M26 1097.7H1646M26 1090.0H1646M26 1082.5H1646M26 1075.1H1646M26 1067.8H1646M26 1060.7H1646M26 1053.7H1646M26 1046.8H1646M26 1040.1H1646M26 1033.4H1646M26 1026.9H1646M26 1020.5H1646M26 1014.2H1646M26 1008.0H1646M26 1001.9H1646M26 995.9H1646M26 990.0H1646M26 984.2H1646M26 978.5H1646M26 972.9H1646M26 967.3H1646M26 961.9H1646M26 956.5H1646M26 951.3H1646M26 946.1H1646M26 941.0H1646M26 936.0H1646M26 931.0H1646M26 926.1H1646M26 921.3H1646M26 916.6H1646M26 911.9H1646M26 907.3H1646M26 902.8H1646M26 898.3H1646M26 893.9H1646M26 889.6H1646M26 885.3H1646M26 881.1H1646M26 876.9H1646M26 872.8H1646M26 868.8H1646M26 864.8H1646M26 860.8H1646M26 856.9H1646M26 853.1H1646M26 849.3H1646M26 845.6H1646M26 841.9H1646M26 838.3H1646M26 834.7H1646M26 831.1H1646M26 827.6H1646M26 824.2H1646M26 820.7H1646M26 817.4H1646M26 814.0H1646M26 810.8H1646M26 807.5H1646M26 804.3H1646M26 801.1H1646M26 798.0H1646M26 794.9H1646M26 791.8H1646M26 788.8H1646M26 785.8H1646M26 782.9H1646M26 780.0H1646M26 777.1H1646M26 774.2H1646M26 771.4H1646M26 768.6H1646M26 765.9H1646M26 763.2H1646M26 760.5H1646M26 757.8H1646M26 755.2H1646M26 752.6H1646M26 750.0H1646M26 747.4H1646M26 744.9H1646M26 742.4H1646M26 740.0H1646M26 737.5H1646M26 735.1H1646M26 732.7H1646M26 730.3H1646M26 728.0H1646M26 725.7H1646M26 723.4H1646M26 721.1H1646M26 718.9H1646M26 716.7H1646M26 714.5H1646M26 712.3H1646M26 710.1H1646M26 708.0H1646M26 705.9H1646M26 703.8H1646M26 701.7H1646M26 699.7H1646M26 697.6H1646M26 695.6H1646M26 693.6H1646M26 691.6H1646M26 689.7H1646M26 687.7H1646M26 685.8H1646M26 683.9H1646M26 682.0H1646M26 680.2H1646M26 678.3H1646M26 676.5H1646M26 674.7H1646M26 672.9H1646M26 671.1H1646M26 669.3H1646M26 667.6H1646M26 665.8H1646M26 664.1H1646M26 662.4H1646M26 660.7H1646M26 659.1H1646M26 657.4H1646M26 655.8H1646M26 654.1H1646M26 652.5H1646M26 650.9H1646M26 649.3H1646M26 647.7H1646M26 646.2H1646M26 644.6H1646M26 643.1H1646M26 641.6H1646M26 640.1H1646M26 638.6H1646M26 637.1H1646M26 635.6H1646M26 634.1H1646M26 632.7H1646M26 631.3H1646M26 629.8H1646M26 628.4H1646M26 627.0H1646M26 625.6H1646M26 624.2H1646M26 622.9H1646M26 621.5H1646M26 620.2H1646M26 618.8H1646M26 617.5H1646M26 616.2H1646M26 614.9H1646M26 613.6H1646M26 612.3H1646M26 611.0H1646M26 609.8H1646M26 608.5H1646M26 607.3H1646M26 606.0H1646M26 604.8H1646M26 603.6H1646M26 602.4H1646M26 601.2H1646"/>
</g>
<!-- green bbox -->
<g stroke="#00f000" stroke-width="1.15" fill="none" stroke-linecap="square">
<path d="M26 508.5 L372.7 408 L1060 408"/>
<path d="M26 508.5 H1646"/>
<path d="M26 508.5 L310.5 1097.5 L1361.4 1097.5 L1648 508"/>
<path d="M372.7 408 L421.5 594"/>
<path d="M456 728.5 L482.6 827.5 L310.5 1097.5"/>
<path d="M482.6 827.5 H732 M805 827.5 H839 M845 827.5 H855 M866 827.5 H983 M1089 827.5 H1189.6 L1361.4 1097.5"/>
<path d="M1189.6 827.5 L1299 408"/>
</g>
<circle cx="1566" cy="110" r="9" fill="#1fee1f"/><path d="M1561.5 105.5L1570.5 114.5M1570.5 105.5L1561.5 114.5" stroke="#000" stroke-width="1.6"/>
</svg>

<div id="custom" class="a">Custom</div>
<div id="l1" class="a lbl">pkg_local</div><div id="l2" class="a lbl">/wa_mod_kirov_airship.grp</div><div id="l3" class="a lbl">PC</div>
<div id="splitR" class="a"></div>
<div id="props" class="a">
<div id="phead" class="a"><div id="ptab" class="a"><span class="a" id="ptt">Properties</span></div>
<svg class="a" style="left:365px;top:5px" width="12" height="12" viewBox="0 0 12 12"><path d="M1 1L11 11M11 1L1 11" stroke="#fff" stroke-width="1.3"/></svg></div>
<div id="pgrad" class="a"></div>
<div id="pdark" class="a"></div>
<div id="pscroll" class="a"><div id="pthumb" class="a"></div></div>
<div class="vl a" style="left:4px"></div><div class="vl a" style="left:14px"></div><div class="vl a" style="left:24px;top:740px;height:136px"></div><div class="vl a" style="left:24px;top:907px;height:240px"></div>
<div id="gtopline" class="a"></div>
<div class="cb a on" style="top:759px"></div><div class="cbl a" style="top:759px">Show collider</div><div class="cb a" style="top:788px"></div><div class="cbl a dis" style="top:788px">Show bounding box</div><div class="cb a" style="top:817px"></div><div class="cbl a dis" style="top:817px">Show phys collidable</div><div class="cb a" style="top:846px"></div><div class="cbl a dis" style="top:846px">Show traceable</div>
<div class="gbot a" style="top:875px"></div>
<div class="shead a" style="top:885px"><svg class="a" style="left:11px;top:6px" width="11" height="10" viewBox="0 0 11 10"><path d="M0 0H11L5.5 9.5Z" fill="#000"/></svg><span class="a sht">All used textures (8 tex)</span></div>
<div class="btn a" style="top:915px">sample_3_blade_fast_propmask</div><div class="btn a" style="top:944px">sample_3_blade_slow_propmask</div><div class="btn a" style="top:973px">sample_gray_dark_rottex</div><div class="btn a" style="top:1002px">sample_gray_rottex</div><div class="btn a" style="top:1031px">sample_prop_nm_spec</div><div class="btn a" style="top:1060px">sample_prop_side_df</div><div class="btn a" style="top:1089px">wa_mod_kirov_airship_c</div><div class="btn a" style="top:1118px">wa_mod_kirov_airship_n</div>
<div class="gbot a" style="top:1146px"></div>
<div class="shead a" style="top:1156px;height:22px"><svg class="a" style="left:11px;top:6px" width="10" height="11" viewBox="0 0 10 11"><path d="M0 0V11L9.5 5.5Z" fill="#000"/></svg><span class="a sht b">Lod0 textures (8 tex)</span></div>
</div>
<div id="console" class="a">
<div id="ctitle" class="a"><svg class="a" style="left:8px;top:6px" width="16" height="16" viewBox="0 0 16 16"><defs><radialGradient id="ig" cx=".35" cy=".3" r=".8"><stop offset="0" stop-color="#5a7fe0"/><stop offset=".6" stop-color="#2a4bb8"/><stop offset="1" stop-color="#1c3590"/></radialGradient></defs><circle cx="8" cy="8" r="7.3" fill="url(#ig)" stroke="#8a8f98" stroke-width="1"/><rect x="7" y="6.6" width="2" height="6" fill="#fff"/><rect x="7" y="3.4" width="2" height="2" fill="#fff"/></svg><span class="a" id="ctt">AssetViewer console</span></div>
<div id="ctext" class="a"></div><div id="cclip" class="a"><div id="clines" class="a"><div class="g">duplicate asset smoke_ground_small_cmps_fx of type &lt;fx&gt; in namespace gameres</div><div class="g">duplicate asset smoke_ground_cmps_fx of type &lt;fx&gt; in namespace gameres</div><div class="g">duplicate asset smoke_jet_landing_cmps_fx of type &lt;fx&gt; in namespace gameres</div><div class="g">duplicate asset smoke_major_engine_cmps_fx of type &lt;fx&gt; in namespace gameres</div><div class="g">duplicate asset smoke_minor_engine_cmps_fx of type &lt;fx&gt; in namespace gameres</div><div class="g">duplicate asset smoke_nozzle_cmps_fx of type &lt;fx&gt; in namespace gameres</div><div class="g">duplicate asset smoke_pylon_cmps_fx of type &lt;fx&gt; in namespace gameres</div><div class="g">duplicate asset smoke_rocketlaunch_ground_cmps_fx of type &lt;fx&gt; in namespace gameres</div><div class="g">duplicate asset smoke_wrecked_pieces_cmps_fx of type &lt;fx&gt; in namespace gameres</div><div class="g">duplicate asset smoke_wrecked_vehicle_cmps_fx of type &lt;fx&gt; in namespace gameres</div><div class="g">duplicate asset sparks_ground_firction_dirt_cmps_fx of type &lt;fx&gt; in namespace gameres</div><div class="g">duplicate asset sparks_ground_track_firction_cmps_fx of type &lt;fx&gt; in namespace gameres</div><div class="g">duplicate asset sparks_roman_candle_cmps_fx of type &lt;fx&gt; in namespace gameres</div><div class="g">duplicate asset sparks_track_hit_cmps_fx of type &lt;fx&gt; in namespace gameres</div><div class="g">duplicate asset water_air_fuel_leak_cmps_fx of type &lt;fx&gt; in namespace gameres</div><div class="g">duplicate asset water_air_leak_cmps_fx of type &lt;fx&gt; in namespace gameres</div><div class="g">duplicate asset water_air_oil_leak_cmps_fx of type &lt;fx&gt; in namespace gameres</div><div class="g">duplicate asset water_jet_trail_cmps_fx of type &lt;fx&gt; in namespace gameres</div><div class="g">duplicate asset water_trail_cmps_fx of type &lt;fx&gt; in namespace gameres</div><div>added 146463 gameRes assets</div><div>assetBuildCache installed hooks to gameres system</div><div>texture conversion cache inited</div><div>initDeferredShadows: CSM(2048,2x2,100m,0.80) VSM(16,1000m)</div><div>checking assets up-to-date</div><div class="g">removed outdated cache: D:/Steam/steamapps/common/War Thunder/WarThunderCDK/develop/.cache/pkg_local~/wa_mod_kirov_airship.dxp.bin.PC.bin</div><div class="g">removed outdated cache: D:/Steam/steamapps/common/War Thunder/WarThunderCDK/develop/.cache/pkg_local~/wa_mod_kirov_airship.grp.PC.bin</div><div>checking assets up-to-date...complete in 0.01s</div><div>installed logerr-&gt;CON reporter, filtering: include=&lt;ANY&gt;  exclude=&lt;NONE&gt;</div><div>Found and inited collision 'wa_mod_kirov_airship_collision'</div><div>Found and inited collision 'wa_mod_kirov_airship_collision'</div><div>Found and inited collision 'wa_mod_kirov_airship_collision'</div><div>  Skip exporting main assets</div><div>  Exporting pkg_local without grpHdrCache</div><div>[1/1] Converting textures to DDSx: D:/Steam/steamapps/common/War Thunder/content/pkg_local/res/pkg_local_/wa_mod_kirov_airship.dxp.bin...</div><div>Writing ddsxTex pack: D:/Steam/steamapps/common/War Thunder/content/pkg_local/res/pkg_local_/wa_mod_kirov_airship.dxp.bin...</div><div>built D:/Steam/steamapps/common/War Thunder/content/pkg_local/res/pkg_local_/wa_mod_kirov_airship.dxp.bin: 3064 Kb, 2 textures</div><div>&#8203;</div><div>[1/1] Exporting gameRes pack: D:/Steam/steamapps/common/War Thunder/content/pkg_local/res/pkg_local_/wa_mod_kirov_airship.grp...</div><div>built D:/Steam/steamapps/common/War Thunder/content/pkg_local/res/pkg_local_/wa_mod_kirov_airship.grp: 2470 Kb, 4 resources</div><div>&#8203;</div><div>checking assets up-to-date</div><div>checking assets up-to-date...complete in 0.00s</div><div>Found and inited collision 'wa_mod_kirov_airship_collision'</div></div></div>
<div id="cprog" class="a"><i style="left:0px"></i><i style="left:12px"></i><i style="left:24px"></i><i style="left:36px"></i><i style="left:48px"></i><i style="left:60px"></i><i style="left:72px"></i><i style="left:84px"></i><i style="left:96px"></i><i style="left:108px"></i><i style="left:120px"></i><i style="left:132px"></i><i style="left:144px"></i><i style="left:156px"></i><i style="left:168px"></i><i style="left:180px"></i><i style="left:192px"></i><i style="left:204px"></i><i style="left:216px"></i><i style="left:228px"></i><i style="left:240px"></i><i style="left:252px"></i><i style="left:264px"></i><i style="left:276px"></i><i style="left:288px"></i><i style="left:300px"></i><i style="left:312px"></i><i style="left:324px"></i><i style="left:336px"></i><i style="left:348px"></i><i style="left:360px"></i><i style="left:372px"></i><i style="left:384px"></i><i style="left:396px"></i><i style="left:408px"></i><i style="left:420px"></i><i style="left:432px"></i><i style="left:444px"></i><i style="left:456px"></i><i style="left:468px"></i><i style="left:480px"></i><i style="left:492px"></i><i style="left:504px"></i><i style="left:516px"></i><i style="left:528px"></i><i style="left:540px"></i><i style="left:552px"></i><i style="left:564px"></i><i style="left:576px"></i><i style="left:588px"></i><i style="left:600px"></i><i style="left:612px"></i><i style="left:624px"></i><i style="left:636px"></i><i style="left:648px"></i><i style="left:660px"></i><i style="left:672px"></i><i style="left:684px"></i><i style="left:696px"></i><i style="left:708px"></i><i style="left:720px"></i><i style="left:732px"></i><i style="left:744px"></i><i style="left:756px"></i><i style="left:768px"></i><i style="left:780px"></i><i style="left:792px"></i><i style="left:804px"></i><i style="left:816px"></i><i style="left:828px"></i><i style="left:840px"></i><i style="left:852px"></i><i style="left:864px"></i><i style="left:876px"></i><i style="left:888px"></i><i style="left:900px"></i><i style="left:912px"></i><i style="left:924px"></i><i style="left:936px"></i><i style="left:948px"></i><i style="left:960px"></i><i style="left:972px"></i><i style="left:984px"></i><i style="left:996px"></i></div>
<div id="cinput" class="a"></div>
</div>
</body></html>
